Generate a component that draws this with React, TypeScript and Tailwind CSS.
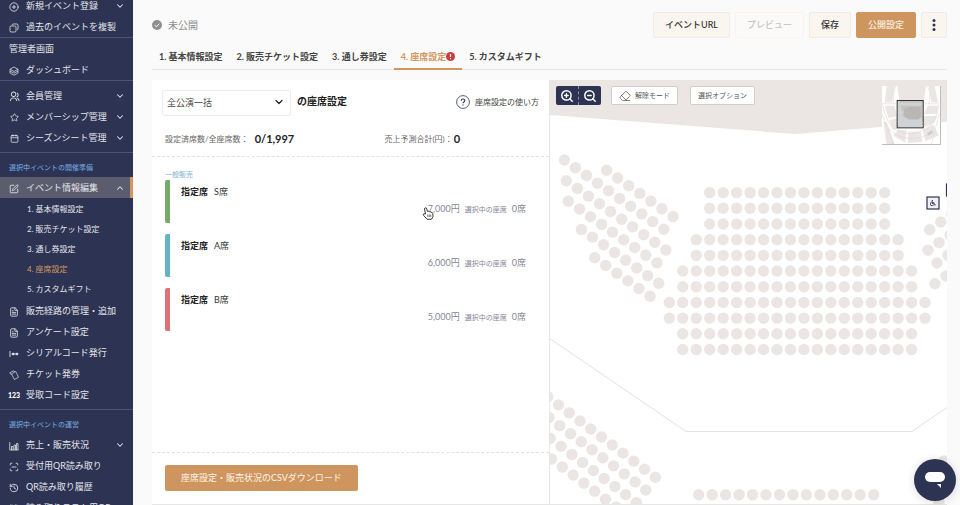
import React from "react";
import { Calendar, ChevronDown, ChevronUp, CirclePlus, Eraser, FileText, History, LayoutGrid, ScanLine, SquarePen, Star, ZoomIn, ZoomOut } from "lucide-react";
import { FaWheelchair } from "react-icons/fa";
import { RiGroupLine } from "react-icons/ri";

const SEAT = "#ebe6e4";

function CopyIcon() {
  return (
    <svg width="10" height="10" viewBox="0 0 20 20" fill="none" stroke="currentColor" strokeWidth="1.6">
      <rect x="2" y="6" width="12" height="12" rx="2.5" />
      <path d="M6 4.5C6 3 7 2 8.500 2H15.500C17 2 18 3 18 4.500V11.500C18 13 17 14 15.800 14" />
    </svg>
  );
}

function StackIcon() {
  return (
    <svg width="10" height="10" viewBox="0 0 20 20" fill="none" stroke="currentColor" strokeWidth="1.5" strokeLinejoin="round">
      <path d="M10 2L18 6.500L10 11L2 6.500Z" />
      <path d="M2 6.500V10L10 14.500L18 10V6.500M2 10V14L10 18.500L18 14V10" />
    </svg>
  );
}

function SerialIcon() {
  return (
    <svg width="10" height="10" viewBox="0 0 20 20" fill="none" stroke="currentColor" strokeWidth="1.8">
      <path d="M2 4V16M5 10H18" />
      <circle cx="8.500" cy="10" r="1.800" fill="currentColor" />
      <circle cx="16" cy="10" r="1.800" fill="currentColor" />
    </svg>
  );
}

function TicketIcon() {
  return (
    <svg width="10" height="10" viewBox="0 0 20 20" fill="none" stroke="currentColor" strokeWidth="1.400" strokeLinejoin="round">
      <path d="M5 7.500L13.500 3L19 14.500L10.500 19Z" />
      <path d="M4.500 9.500L1.500 5.500L9.500 1.500L11.500 4" />
    </svg>
  );
}

function ChartIcon() {
  return (
    <svg width="10" height="10" viewBox="0 0 20 20" fill="none" stroke="currentColor" strokeWidth="1.600">
      <path d="M1.500 2V18H19" />
      <path d="M5 18V11H8V18M10 18V8H13V18M15 18V5H18V18" />
    </svg>
  );
}

type NavItemProps = {
  icon: React.ReactNode;
  label: string;
  arrow?: "up" | "down";
  active?: boolean;
};

function NavItem({ icon, label, arrow, active }: NavItemProps) {
  return (
    <a
      href="#"
      className={
        active
          ? "flex h-[21px] items-center border-r-[3px] border-[#d2975f] bg-[#5b5c6e] pl-[9px] pr-[5px]"
          : "flex h-[21px] items-center pl-[9px] pr-2"
      }
    >
      <span className="mr-[7px] flex w-2.5 shrink-0 justify-center pt-0.5">{icon}</span>
      <span className="flex-1 whitespace-nowrap">{label}</span>
      {arrow === "down" && <ChevronDown size={10} strokeWidth={2.5} />}
      {arrow === "up" && <ChevronUp size={10} strokeWidth={2.5} />}
    </a>
  );
}

function NavHeading({ children }: { children: React.ReactNode }) {
  return <p className="flex h-6 items-end pl-[9px] text-[7px] leading-5 font-medium whitespace-nowrap text-[#6c9bd2]">{children}</p>;
}

const subItems = ["1. 基本情報設定", "2. 販売チケット設定", "3. 通し券設定", "4. 座席設定", "5. カスタムギフト"];

function Sidebar() {
  return (
    <nav className="w-[133px] shrink-0 overflow-hidden bg-[#2d3352] text-[9px] text-[#e3e4ea]">
      <div className="-mt-[5px] border-b border-[#4e5370]">
        <NavItem icon={<CirclePlus size={10} />} label="新規イベント登録" arrow="down" />
        <NavItem icon={<CopyIcon />} label="過去のイベントを複製" />
      </div>
      <div className="border-b border-[#4e5370]">
        <p className="flex h-[21px] items-center pl-[9px]">管理者画面</p>
        <NavItem icon={<StackIcon />} label="ダッシュボード" />
      </div>
      <div className="border-b border-[#4e5370] py-1">
        <NavItem icon={<RiGroupLine size={11} className="shrink-0" />} label="会員管理" arrow="down" />
        <NavItem icon={<Star size={9} />} label="メンバーシップ管理" arrow="down" />
        <NavItem icon={<Calendar size={9} />} label="シーズンシート管理" arrow="down" />
      </div>
      <div className="border-b border-[#4e5370] pb-1">
        <NavHeading>選択中イベントの開催準備</NavHeading>
        <NavItem icon={<SquarePen size={10} />} label="イベント情報編集" arrow="up" active />
        <ul className="py-px text-[8px]">
          {subItems.map((item, i) => (
            <li key={item}>
              <a href="#" className={i === 3 ? "flex h-5 items-center pl-[27px] text-[#d2975f]" : "flex h-5 items-center pl-[27px]"}>
                {item}
              </a>
            </li>
          ))}
        </ul>
        <NavItem icon={<FileText size={10} />} label="販売経路の管理・追加" />
        <NavItem icon={<FileText size={10} />} label="アンケート設定" />
        <NavItem icon={<SerialIcon />} label="シリアルコード発行" />
        <NavItem icon={<TicketIcon />} label="チケット発券" />
        <NavItem icon={<span className="text-[7px] font-black text-white">123</span>} label="受取コード設定" />
      </div>
      <NavHeading>選択中イベントの運営</NavHeading>
      <NavItem icon={<ChartIcon />} label="売上・販売状況" arrow="down" />
      <NavItem icon={<ScanLine size={10} />} label="受付用QR読み取り" />
      <NavItem icon={<History size={10} />} label="QR読み取り履歴" />
      <NavItem icon={<LayoutGrid size={10} />} label="読み取りテスト用QR" />
    </nav>
  );
}

function Header() {
  const button = "h-[26px] rounded-[2px] border px-[11px] whitespace-nowrap";
  return (
    <header className="flex items-center justify-between pt-3">
      <div className="flex items-center gap-1.5 text-[10px] text-[#8c8c8c]">
        <svg width="10" height="10" viewBox="0 0 20 20">
          <circle cx="10" cy="10" r="10" fill="#8f8f8f" />
          <path d="M5.500 10.500L8.800 13.500L14.500 7.500" fill="none" stroke="#fff" strokeWidth="2" />
        </svg>
        未公開
      </div>
      <div className="flex gap-[5px] text-[9px] font-medium text-[#333]">
        <button className={`${button} border-[#efebe6] bg-[#faf5ef]`}>イベントURL</button>
        <button disabled className={`${button} border-[#f7f5f3] bg-[#fcfaf8] text-[#c6c6c6]`}>プレビュー</button>
        <button className={`${button} border-[#efebe6] bg-[#faf5ef]`}>保存</button>
        <button className={`${button} border-[#cf955e] bg-[#cf955e] text-[#fbeee0]`}>公開設定</button>
        <button aria-label="メニュー" className="flex h-[26px] w-[26px] items-center justify-center rounded-[2px] border border-[#efebe6] bg-[#faf5ef]">
          <svg width="4" height="14" viewBox="0 0 4 14" fill="#2d3352">
            <circle cx="2" cy="2.500" r="1.500" />
            <circle cx="2" cy="7" r="1.500" />
            <circle cx="2" cy="11.500" r="1.500" />
          </svg>
        </button>
      </div>
    </header>
  );
}

function Tabs() {
  const tab = "flex h-[25px] items-center px-[7px] whitespace-nowrap";
  return (
    <div className="mt-1.5 flex border-b border-[#e6e6e6] text-[9px] font-bold text-[#444]">
      <a href="#" className={tab}>1. 基本情報設定</a>
      <a href="#" className={tab}>2. 販売チケット設定</a>
      <a href="#" className={tab}>3. 通し券設定</a>
      <a href="#" className={`${tab} relative text-[#d2975f] after:absolute after:inset-x-0 after:-bottom-px after:h-0.5 after:bg-[#d2975f]`}>
        4. 座席設定
        <svg width="9" height="9" viewBox="0 0 18 18">
          <circle cx="9" cy="9" r="9" fill="#cf3a3a" />
          <path d="M9 4V10M9 12V14.500" stroke="#fff" strokeWidth="2.400" />
        </svg>
      </a>
      <a href="#" className={tab}>5. カスタムギフト</a>
    </div>
  );
}

const tickets = [
  { name: "S席", price: "7,000円", bar: "bg-[#77aa69]" },
  { name: "A席", price: "6,000円", bar: "bg-[#63b5c3]" },
  { name: "B席", price: "5,000円", bar: "bg-[#df7275]" },
];

function SettingsPanel() {
  return (
    <section className="flex min-w-0 flex-1 flex-col border-b border-[#e6e6e6] bg-white">
      <div className="border-b border-dashed border-[#e2e2e2] pb-2.5">
        <div className="flex items-center px-2.5 pt-2">
          <div className="relative w-[129px]">
            <select aria-label="公演" className="h-[26px] w-full appearance-none rounded-[2px] border border-[#ececec] bg-white px-1 text-[9px] text-[#444]">
              <option>全公演一括</option>
            </select>
            <ChevronDown size={12} strokeWidth={2.5} className="pointer-events-none absolute top-2 right-1.5 text-[#222]" />
          </div>
          <h2 className="ml-1.5 flex-1 text-[10px] font-bold text-[#222]">の座席設定</h2>
          <a href="#" className="flex items-center gap-[5px] text-[8px] text-[#444]">
            <svg width="14" height="14" viewBox="0 0 28 28" fill="none" stroke="#2d3352">
              <circle cx="14" cy="14" r="12.800" strokeWidth="1.600" />
              <path d="M10.500 11.500C10.500 9.300 12 8 14 8S17.600 9.300 17.600 11.200C17.600 13.800 14 14 14 16.600" strokeWidth="2.200" />
              <path d="M14 18.800V21.200" strokeWidth="2.400" />
            </svg>
            座席設定の使い方
          </a>
        </div>
        <dl className="mt-4 flex px-[13px] text-[8px] leading-[14px] text-[#666]">
          <div className="flex flex-[55] items-center">
            <dt>設定済席数/全座席数：</dt>
            <dd className="ml-1.5 text-[11px] font-bold text-[#222]">0/1,997</dd>
          </div>
          <div className="flex flex-[38] items-center">
            <dt>売上予測合計(円)：</dt>
            <dd className="ml-px text-[11px] font-bold text-[#222]">0</dd>
          </div>
        </dl>
      </div>
      <div className="flex-1 px-[13px] pt-[11px]">
        <h3 className="text-[7px] leading-3 text-[#85b0cf]">一般販売</h3>
        <ul className="flex flex-col gap-[11px]">
          {tickets.map((ticket) => (
            <li key={ticket.name} className="flex h-[43px]">
              <span className={`w-[5px] rounded-l-[2px] ${ticket.bar}`} />
              <div className="flex-1 pt-1 pr-2.5 pl-[11px] text-[9px]">
                <p className="leading-4 text-[#333]">
                  <b className="mr-1.5 text-[#222]">指定席</b>
                  {ticket.name}
                </p>
                <p className="mt-px flex items-center justify-end leading-4 text-[#858796]">
                  {ticket.price}
                  <span className="mx-[5px] text-[7px]">選択中の座席</span>
                  0席
                </p>
              </div>
            </li>
          ))}
        </ul>
      </div>
      <div className="border-t border-dashed border-[#e2e2e2] px-[13px] pt-3 pb-[13px]">
        <button className="block h-[26px] rounded-[2px] bg-[#cf955e] px-4 text-[9px] text-[#fff3e6]">座席設定・販売状況のCSVダウンロード</button>
      </div>
    </section>
  );
}

type SeatRow = { x: number; y: number; dx: number; dy: number; count: number };

// centre block: [first column, number of seats] for each row
const centreRows = [
  [0, 14], [0, 14], [0, 14], [-1, 16], [-1, 16], [-2, 18], [-2, 18], [-3, 20], [-3, 20], [-2, 18], [-2, 18],
];

const seatRows: SeatRow[] = [
  ...centreRows.map(([start, count], i) => ({ x: 159.7 + start * 13.46, y: 112.6 + i * 15.69, dx: 13.46, dy: 0, count })),
  { x: 148.7, y: 414.8, dx: 13.46, dy: 0, count: 14 },
  // upper left block
  { x: 56.6, y: 90.3, dx: 11.06, dy: 7.7, count: 7 },
  { x: 14.3, y: 80, dx: 11.06, dy: 7.7, count: 10 },
  { x: 16.3, y: 100.7, dx: 11.06, dy: 7.7, count: 10 },
  { x: 18.4, y: 121.3, dx: 11.06, dy: 7.7, count: 9 },
  { x: 31.4, y: 149.4, dx: 11.06, dy: 7.7, count: 8 },
  { x: 44.7, y: 177.7, dx: 11.06, dy: 7.7, count: 6 },
  // lower left block
  { x: -2.3, y: 316.8, dx: 10.76, dy: 8.04, count: 11 },
  { x: -1, y: 337.6, dx: 10.76, dy: 8.04, count: 10 },
  { x: 0.3, y: 358.3, dx: 10.76, dy: 8.04, count: 9 },
  { x: 1.6, y: 379, dx: 10.76, dy: 8.04, count: 7 },
  // right block
  { x: 379.7, y: 149.7, dx: 11.06, dy: -7.7, count: 3 },
  { x: 378, y: 170.3, dx: 11.06, dy: -7.7, count: 3 },
  { x: 387, y: 183, dx: 11.06, dy: -7.7, count: 2 },
  { x: 385, y: 203.7, dx: 11.06, dy: -7.7, count: 2 },
  { x: 394, y: 381, dx: 11.06, dy: -7.7, count: 1 },
  { x: 389, y: 422, dx: 11.06, dy: -7.7, count: 1 },
];

function SeatMap() {
  return (
    <svg className="absolute inset-0 h-full w-full">
      <path d="M0 0H2000V-30L397 41.700L245 54L0 35Z" fill={SEAT} />
      <path d="M0 258.700L136 351.500H362L397 327.500" fill="none" stroke="#e2e2e2" />
      {seatRows.map((row, r) =>
        Array.from({ length: row.count }, (_, i) => (
          <circle key={`${r}-${i}`} cx={row.x + i * row.dx} cy={row.y + i * row.dy} r="5.7" fill={SEAT} />
        ))
      )}
      <rect x="377" y="117" width="12" height="12" fill="#eef0f2" stroke="#2d3352" strokeWidth="1.200" />
      <FaWheelchair x={380} y={120} size={6} color="#2d3352" />
      <rect x="396.500" y="104" width="12" height="12" fill="#eef0f2" stroke="#2d3352" strokeWidth="1.200" />
    </svg>
  );
}

function MiniMap() {
  return (
    <svg viewBox="0 0 176 176" className="absolute top-1.5 right-1.5 h-[59px] w-[59px] border-r border-b border-[#bdbdbd] bg-white">
      <g fill={SEAT}>
        <path d="M46 0H134L126 50H54Z" />
        <path d="M14 0H38L30 50H8ZM142 0H160L170 50H150Z" />
        <path d="M8 60H38L46 92L20 98ZM138 60H170L166 84L128 86Z" />
        <path d="M22 104L46 96L50 128L34 134ZM50 132L76 136L70 172L34 150Z" />
        <path d="M80 138L118 138L122 170L78 172ZM124 134L156 116L172 150L132 168Z" />
        <path d="M124 92L168 90L158 112L124 126ZM4 110L14 108L38 176H14Z" />
        <path d="M56 60H124L118 76H62Z" />
      </g>
      <g fill="none" stroke="#dedbda" strokeWidth="2">
        <path d="M0 54H44M130 54H174M42 0Q30 26 34 54M138 0Q150 26 142 54" />
        <path d="M2 58Q14 120 46 134Q88 160 134 128Q166 110 172 58" />
        <path d="M0 84L34 176M174 84L150 176M20 130Q76 182 158 140" />
      </g>
      <rect x="46" y="44" width="79" height="83" fill="#777b7d" fillOpacity=".35" stroke="#333" strokeWidth="3" />
      <path d="M68 70L86 64H112L120 74V94L110 102H82L64 90Z" fill="#b9b7b6" />
      <path d="M48 98L74 110H124M48 108L72 120H124" fill="none" stroke="#cbd4d8" strokeWidth="3" />
      <path d="M136 146L150 134L156 140L142 150Z" fill="#c9cccc" />
    </svg>
  );
}

function MapPanel() {
  const tool = "flex h-[19px] items-center rounded-[2px] border border-[#cfcfcf] bg-white text-[#555] whitespace-nowrap";
  return (
    <section className="relative min-w-0 flex-1 overflow-hidden border-b border-l border-[#e6e6e6] bg-white">
      <SeatMap />
      <div className="absolute top-1.5 left-1.5 flex text-[7px]">
        <div className="mr-2.5 flex h-[19px] w-[45px] rounded-[2px] bg-[#2d3352] text-white">
          <button aria-label="拡大" className="flex flex-1 items-center justify-center border-r border-dashed border-[#8a8ea5]">
            <ZoomIn size={14} strokeWidth={2.5} />
          </button>
          <button aria-label="縮小" className="flex flex-1 items-center justify-center">
            <ZoomOut size={14} strokeWidth={2.5} />
          </button>
        </div>
        <button className={`${tool} mr-3 gap-1 px-[7px]`}>
          <Eraser size={12} strokeWidth={1.5} />
          解除モード
        </button>
        <button className={`${tool} px-[7px]`}>選択オプション</button>
      </div>
      <MiniMap />
    </section>
  );
}

function HandCursor() {
  return (
    <svg width="12" height="13" viewBox="0 0 24 26" className="pointer-events-none absolute top-[207px] left-[422px]">
      <path
        d="M7 14L5 4Q5 1.500 7 1.500T9.500 4L11 9Q13 7.500 14.500 9.500Q17 8.500 18 10.500Q21 10 21.500 13L22 19L19 24.500H10L3 16.500Q1.500 14 4 13.500Z"
        fill="#fff"
        stroke="#222"
        strokeWidth="1.800"
        strokeLinejoin="round"
      />
      <path d="M11.500 15V20M14.500 15V20M17.500 15V20" stroke="#222" strokeWidth="1.200" />
    </svg>
  );
}

export default function App() {
  return (
    <div className="relative flex h-screen overflow-hidden bg-[#fafafa] font-['Lato','Noto_Sans_CJK_JP',sans-serif]">
      <Sidebar />
      <main className="flex min-w-0 flex-1 flex-col pr-[13px] pl-[19px]">
        <Header />
        <Tabs />
        <div className="mt-2.5 flex min-h-0 flex-1">
          <SettingsPanel />
          <MapPanel />
        </div>
      </main>
      <HandCursor />
      <button aria-label="チャット" className="fixed right-1 bottom-1 flex h-[42px] w-[42px] items-center justify-center rounded-full bg-[#2d3352] shadow-[0_1px_8px_rgba(0,0,0,0.15)]">
        <svg width="20" height="16" viewBox="0 0 20 16" fill="#fff">
          <rect x="0" y="0" width="20" height="10" rx="5" />
          <path d="M12 12H16V16Z" />
        </svg>
      </button>
    </div>
  );
}
